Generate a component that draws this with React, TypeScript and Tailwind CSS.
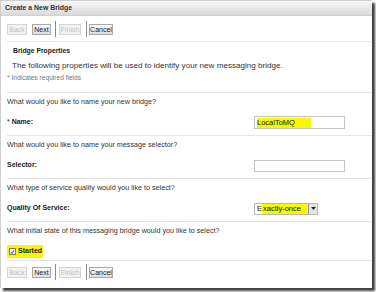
const btnBase = 'h-[11px] px-[3px] flex items-center border text-[7px] leading-none'

function Buttons() {
  return (
    <div className="flex items-center h-[16px]">
      <div className={`${btnBase} w-[20px] justify-center border-[#d4d4d4] bg-[#f3f3f3] text-[#c0c0c0]`}>Back</div>
      <div className={`${btnBase} w-[19px] ml-[5px] justify-center border-[#a9a9a9] bg-gradient-to-b from-[#fafafa] to-[#dedede] text-[#222]`}>Next</div>
      <div className="w-px h-[16px] bg-[#8a8a8a] ml-[4px]" />
      <div className={`${btnBase} w-[22px] ml-[3px] justify-center border-[#d4d4d4] bg-[#f3f3f3] text-[#c0c0c0]`}>Finish</div>
      <div className="w-px h-[16px] bg-[#8a8a8a] ml-[5px]" />
      <div className={`${btnBase} w-[24px] ml-[2px] justify-center border-[#a9a9a9] bg-gradient-to-b from-[#fafafa] to-[#dedede] text-[#222]`}>Cancel</div>
    </div>
  )
}

function Section({ question, label, children }: { question: string; label: React.ReactNode; children?: React.ReactNode }) {
  return (
    <div className="border-t border-[#e6e6e6] h-[43px]">
      <p className="mt-[5px] h-[8px] leading-[8px] text-[7.2px]">{question}</p>
      <div className="mt-[10px] h-[13px] flex items-center">
        <div className="w-[247px] font-bold text-[#1a1a1a]">{label}</div>
        {children}
      </div>
    </div>
  )
}

export default function App() {
  return (
    <div className="w-[376px] h-[292px] bg-white">
      <div className="w-[372px] h-[288px] bg-white border-l border-t border-[#cfcfcf] shadow-[3px_3px_2px_rgba(0,0,0,0.75)] flex flex-col font-['Liberation_Sans',sans-serif] text-[7px] text-[#333]">
        <div className="h-[15px] shrink-0 flex items-center px-[4px] bg-gradient-to-b from-[#f7f7f7] to-[#dadada] border-b border-[#d0d0d0] font-bold text-[6.9px] text-[#333]">
          Create a New Bridge
        </div>
        <div className="pl-[6px] flex flex-col">
          <div className="mt-[5px]">
            <Buttons />
          </div>
          <div className="mt-[4px] border-t border-[#e6e6e6] h-[51px]">
            <p className="mt-[5px] pl-[6px] h-[8px] leading-[8px] font-bold text-[6.8px] text-[#1a1a1a]">Bridge Properties</p>
            <p className="mt-[7px] pl-[5px] h-[8px] leading-[8px] text-[8.1px]">
              The following properties will be used to identify your new messaging bridge.
            </p>
            <p className="mt-[4px] h-[8px] leading-[8px] text-[6.6px] text-[#777]">* Indicates required fields</p>
          </div>
          <Section question="What would you like to name your new bridge?" label={<span><span className="font-normal">* </span>Name:</span>}>
            <div className="w-[91px] h-[13px] border border-[#c4c4c4] flex items-center pl-[2px] text-[7.5px] text-[#111]">
              <span className="bg-[#f8f800] pr-[16px] leading-[10px]">LocalToMQ</span>
            </div>
          </Section>
          <Section question="What would you like to name your message selector?" label="Selector:">
            <div className="w-[91px] h-[12px] border border-[#c4c4c4]" />
          </Section>
          <Section question="What type of service quality would you like to select?" label="Quality Of Service:">
            <div className="w-[64px] h-[12px] border border-[#b8b8b8] flex items-center text-[7.5px] text-[#111]">
              <span className="pl-[2px]">E</span>
              <span className="bg-[#f8f800] leading-[10px] flex-1 pl-px">xactly-once</span>
              <div className="w-[9px] h-[10px] border-l border-[#999] bg-[#e4e4e4] flex items-center justify-center">
                <svg width="5" height="3" viewBox="0 0 5 3"><path d="M0 0h5L2.5 3z" fill="#222" /></svg>
              </div>
            </div>
          </Section>
          <div className="border-t border-[#e6e6e6] h-[39px]">
            <p className="mt-[5px] h-[8px] leading-[8px] text-[7.2px]">What initial state of this messaging bridge would you like to select?</p>
            <div className="mt-[10px] h-[13px] flex items-center">
              <div className="h-[13px] flex items-center gap-[2px] bg-[#f8f800] pl-[2px] pr-[1px] font-bold text-[#1a1a1a]">
                <div className="w-[7px] h-[7px] border border-[#777] bg-white flex items-center justify-center">
                  <svg width="6" height="6" viewBox="0 0 6 6"><path d="M1 3l1.5 1.8L5 0.8" stroke="#222" strokeWidth="1" fill="none" /></svg>
                </div>
                Started
              </div>
            </div>
          </div>
          <div className="border-t border-[#e6e6e6] pt-[3px]">
            <Buttons />
          </div>
        </div>
      </div>
    </div>
  )
}
